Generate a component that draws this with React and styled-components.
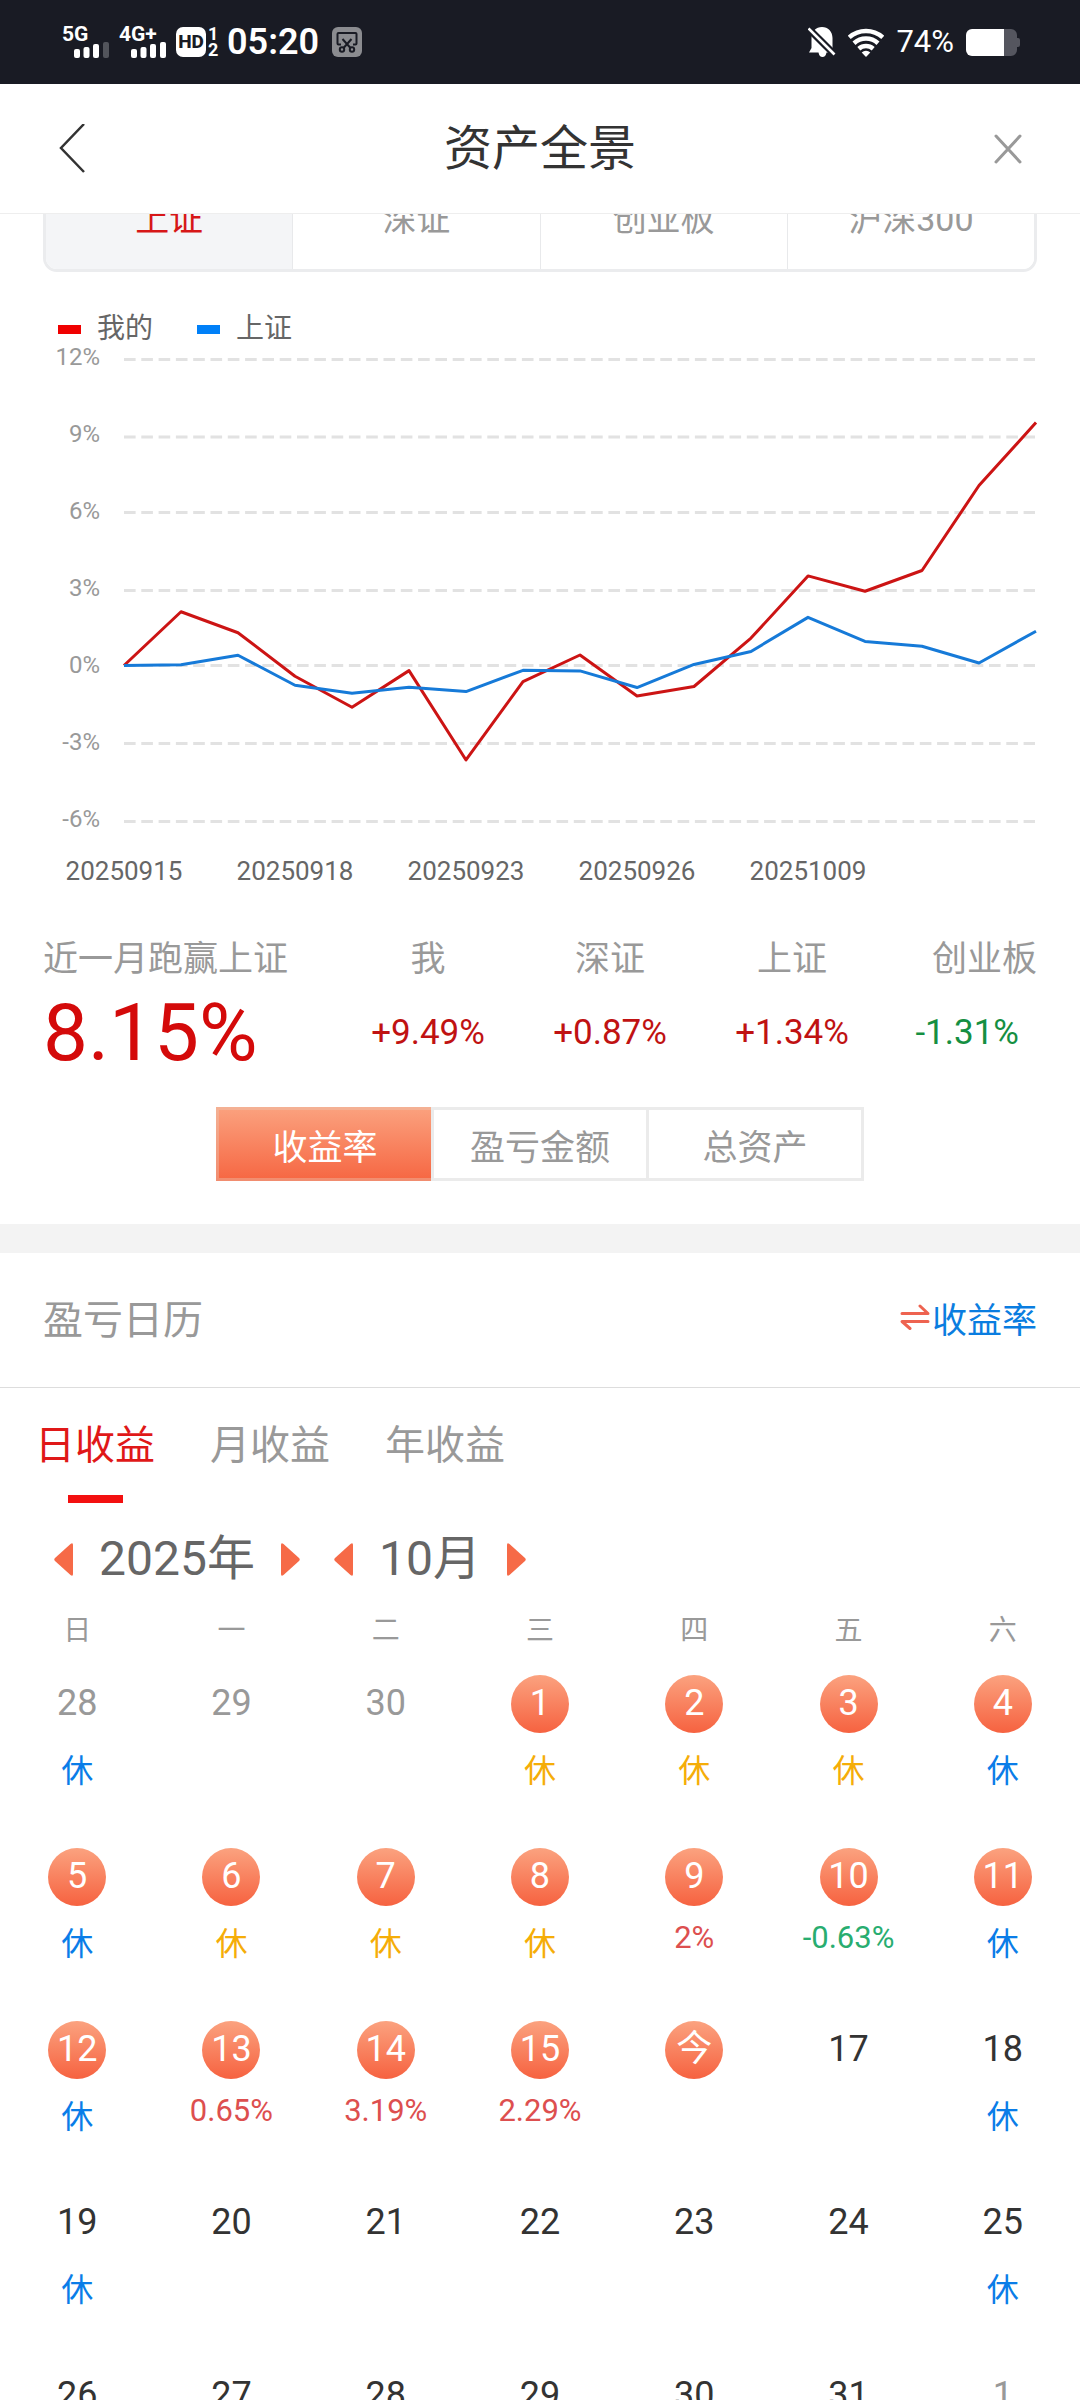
import React, {useState} from "react";
import styled, {createGlobalStyle} from "styled-components";

const GlobalStyle = createGlobalStyle`
  * {
    box-sizing: border-box;
  }

  body {
    margin: 0;
    background: #fff;
    color: #333;
    font-family: Roboto, "Noto Sans CJK SC", sans-serif;
  }

  button {
    padding: 0;
    border: 0;
    background: none;
    color: inherit;
    font: inherit;
    cursor: pointer;
  }

  svg {
    display: block;
  }
`;

const Page = styled.div`
  display: flex;
  flex-direction: column;
  height: 100vh;
`;

const StatusBar = styled.div`
  display: flex;
  flex: none;
  justify-content: space-between;
  align-items: center;
  height: 84px;
  padding: 0 60px 0 62px;
  background: #191b24;
  color: #fff;
`;

const StatusGroup = styled.div`
  display: flex;
  align-items: center;
  gap: ${(props) => props.gap};
`;

const Signal = styled.div`
  display: flex;
  flex-direction: column;
  width: 48px;
  font-size: 21px;
  font-weight: 700;
  line-height: 16px;

  svg {
    align-self: flex-end;
  }
`;

const HdBadge = styled.span`
  width: 30px;
  border-radius: 7px;
  background: #fff;
  color: #191b24;
  font-size: 19px;
  font-weight: 800;
  line-height: 30px;
  text-align: center;
`;

const SimNumbers = styled.span`
  display: flex;
  flex-direction: column;
  width: 10px;
  font-size: 18px;
  font-weight: 700;
  line-height: 16px;
  text-align: center;
`;

const Clock = styled.span`
  padding-right: 4px;
  font-size: 36px;
  font-weight: 600;
  line-height: 40px;
`;

const Percent = styled.span`
  font-size: 31px;
  line-height: 40px;
`;

const Header = styled.header`
  display: flex;
  flex: none;
  justify-content: space-between;
  align-items: center;
  height: 130px;
  padding: 0 56px;
  border-bottom: 1px solid #eee;

  h1 {
    margin: 0;
    font-size: 48px;
    font-weight: 400;
    line-height: 64px;
  }
`;

const Content = styled.main`
  flex: 1;
  min-height: 0;
  overflow-y: auto;
  scrollbar-width: none;
`;

/* scrolled halfway under the header */
const IndexTabs = styled.div`
  display: flex;
  height: 109px;
  margin: -51px 43px 0;
  border: 3px solid #ebecee;
  border-radius: 14px;
  overflow: hidden;
`;

const IndexTab = styled.button`
  flex: 1;
  padding-bottom: 3px;
  background: ${(props) => (props.$active ? "#f4f5f7" : "#fff")};
  color: ${(props) => (props.$active ? "#d71718" : "#999")};
  font-size: 34px;

  & + & {
    border-left: 1px solid #e8e9eb;
  }
`;

const Legend = styled.div`
  display: flex;
  gap: 44px;
  margin-top: 44px;
  padding-left: 58px;
  color: #666;
  font-size: 28px;
  line-height: 26px;

  span {
    display: flex;
    align-items: center;
    gap: 16px;
  }

  span::before {
    content: "";
    width: 23px;
    height: 9px;
    background: #f00000;
  }

  span + span::before {
    background: #0080f8;
  }
`;

const Chart = styled.svg`
  width: 100%;
  height: auto;

  text {
    fill: #999;
    font-size: 24px;
    text-anchor: end;
  }

  .date {
    fill: #666;
    font-size: 26px;
    text-anchor: middle;
  }

  polyline {
    fill: none;
    stroke-width: 3;
    stroke-linejoin: round;
  }
`;

const Stats = styled.div`
  display: grid;
  grid-template-columns: 294fr 182fr 182fr 182fr 154fr;
  margin: 48px 43px 0;
`;

const Stat = styled.div`
  display: flex;
  flex-direction: column;
  align-items: center;
  gap: 6px;
  color: #999;
  font-size: 35px;
  line-height: 40px;
  white-space: nowrap;

  strong {
    color: ${(props) => (props.$down ? "#158f42" : "#c01212")};
    font-weight: 400;
    line-height: 94px;
  }

  &:first-child {
    align-items: flex-start;
  }

  &:first-child strong {
    color: #d40a0a;
    font-size: 80px;
  }

  &:last-child {
    align-items: flex-end;
  }

  &:last-child strong {
    padding-right: 18px;
  }
`;

const Segments = styled.div`
  display: flex;
  width: 60%;
  height: 74px;
  margin: 27px auto 43px;
  border: 3px solid #ebebeb;
`;

const Segment = styled.button`
  flex: 1;
  color: #999;
  font-size: 35px;

  & + & {
    border-left: 3px solid #ebebeb;
  }

  ${(props) => props.$active && `
    margin: -3px 0 -3px -3px;
    border: 3px solid rgba(235, 200, 180, 0.4);
    border-right: 0;
    background: linear-gradient(#fba27f, #f66642) border-box;
    color: #fff;
  `}
`;

const Divider = styled.div`
  height: 29px;
  background: #f3f3f3;
`;

const SectionHead = styled.div`
  display: flex;
  justify-content: space-between;
  align-items: center;
  height: 135px;
  padding: 0 43px 6px;
  border-bottom: 1px solid #ddd;

  h2 {
    margin: 0;
    color: #999;
    font-size: 40px;
    font-weight: 400;
  }

  button {
    display: flex;
    align-items: center;
    gap: 2px;
    color: #0a7de0;
    font-size: 35px;
  }
`;

const PeriodTabs = styled.div`
  display: flex;
  gap: 55px;
  padding: 34px 35px 0;
`;

const PeriodTab = styled.button`
  display: flex;
  flex-direction: column;
  align-items: center;
  gap: 25px;
  color: ${(props) => (props.$active ? "#e01818" : "#999")};
  font-size: 40px;
  line-height: 48px;

  &::after {
    content: "";
    width: 55px;
    height: 8px;
    background: ${(props) => (props.$active ? "#f31010" : "transparent")};
  }
`;

const MonthNav = styled.div`
  display: flex;
  gap: 34px;
  margin-top: 28px;
  padding-left: 54px;
  color: #666;
  font-size: 48px;
  line-height: 56px;
`;

const Stepper = styled.div`
  display: flex;
  align-items: center;
  gap: 26px;
`;

const Calendar = styled.table`
  width: 100%;
  margin-top: 24px;
  border-collapse: collapse;
  table-layout: fixed;
  text-align: center;

  th {
    height: 64px;
    padding: 0;
    color: #999;
    font-size: 28px;
    font-weight: 400;
    line-height: 40px;
    vertical-align: top;
  }

  td {
    height: 173px;
    padding: 0;
    vertical-align: top;
  }
`;

const Day = styled.div`
  width: 58px;
  height: 58px;
  margin: 0 auto;
  border-radius: 50%;
  background: ${(props) => (props.$filled ? "linear-gradient(#fba27f, #f66240)" : "none")};
  color: ${(props) => (props.$filled ? "#fff" : props.$muted ? "#999" : "#333")};
  font-size: 36px;
  line-height: 56px;
`;

const Rest = styled.div`
  color: ${(props) => (props.$holiday ? "#f5ad08" : "#0a7de8")};
  font-size: 32px;
  line-height: 76px;
`;

const Gain = styled.div`
  color: ${(props) => (props.$down ? "#28ad70" : "#dd4f4f")};
  font-size: 31px;
  line-height: 64px;
`;

const mine = [0, 2.1, 1.28, -0.42, -1.63, -0.2, -3.69, -0.63, 0.41, -1.19, -0.82, 1.07, 3.5, 2.9, 3.71, 7.03, 9.49];
const shanghai = [0, 0.03, 0.4, -0.77, -1.08, -0.85, -1.02, -0.19, -0.21, -0.86, 0.04, 0.55, 1.88, 0.94, 0.75, 0.1, 1.34];
const levels = ["12%", "9%", "6%", "3%", "0%", "-3%", "-6%"];
const gridLines = [17.5, 95, 170.5, 248.5, 323.5, 401.5, 479.5];
const dates = ["20250915", "20250918", "20250923", "20250926", "20251009"];

const toPoints = (values) =>
  values.map((value, i) => `${124 + i * 57},${323.5 - value * 25.6}`).join(" ");

const stats = [
  ["近一月跑赢上证", "8.15%"],
  ["我", "+9.49%"],
  ["深证", "+0.87%"],
  ["上证", "+1.34%"],
  ["创业板", "-1.31%"],
];

// w = weekend, h = holiday, anything else is the day's return
const marks = {
  "28p": "w", 1: "h", 2: "h", 3: "h", 4: "w", 5: "w", 6: "h", 7: "h", 8: "h",
  9: "2%", 10: "-0.63%", 11: "w", 12: "w", 13: "0.65%", 14: "3.19%", 15: "2.29%",
  18: "w", 19: "w", 25: "w",
};

const weeks = [
  ["28p", "29p", "30p", 1, 2, 3, 4],
  [5, 6, 7, 8, 9, 10, 11],
  [12, 13, 14, 15, 16, 17, 18],
  [19, 20, 21, 22, 23, 24, 25],
  [26, 27, 28, 29, 30, 31, "1n"],
];

function SignalBars({weak}) {
  return (
    <svg width="36" height="16" fill="#fff">
      <rect x="0" y="7" width="6" height="9" rx="2" />
      <rect x="9.5" y="5" width="6" height="11" rx="2" />
      <rect x="19" y="2" width="6" height="14" rx="2" />
      <rect x="29" y="0" width="6" height="16" rx="2" opacity={weak ? 0.25 : 1} />
    </svg>
  );
}

function ScreenshotIcon() {
  return (
    <svg width="30" height="30" fill="none" stroke="#191b24" strokeWidth="2">
      <rect width="30" height="30" rx="6" fill="#8b8c90" stroke="none" />
      <path d="M9 17.5H6.5a1 1 0 0 1-1-1V7a1 1 0 0 1 1-1h17a1 1 0 0 1 1 1v9.500a1 1 0 0 1-1 1H21" />
      <path d="M10.500 12l8 9M19.500 12l-8 9" />
      <circle cx="10" cy="22.500" r="2.200" />
      <circle cx="20" cy="22.500" r="2.200" />
    </svg>
  );
}

function MutedIcon() {
  return (
    <svg width="28" height="30" viewBox="0 0 28 30">
      <path fill="#fff" d="M14 0C8 0 3.500 4.500 3.500 11v10L1 25.500h9.500C11 28.500 12.500 30 14.500 30s3.500-1.500 4-4.500H27L24.500 21V11C24.500 4.500 20 0 14 0z" />
      <path stroke="#191b24" strokeWidth="7" d="M-1 0L29 30" />
      <path stroke="#fff" strokeWidth="2.600" d="M0.500 1.500L26.500 27.500" />
    </svg>
  );
}

function WifiIcon() {
  return (
    <svg width="36" height="29" viewBox="0 0 36 29" fill="none" stroke="#fff" strokeWidth="4.500">
      <path d="M1.200 9.400a25 25 0 0 1 33.600 0" />
      <path d="M6 15.200a18 18 0 0 1 24 0" />
      <path d="M10.800 20.700a11 11 0 0 1 14.400 0" />
      <path d="M18 29l-4.300-4.500a6 6 0 0 1 8.600 0z" fill="#fff" stroke="none" />
    </svg>
  );
}

function BatteryIcon() {
  return (
    <svg width="54" height="27" viewBox="0 0 54 27">
      <path fill="#55565f" d="M38 0h7a6 6 0 0 1 6 6v3h1a2 2 0 0 1 2 2v5a2 2 0 0 1-2 2h-1v3a6 6 0 0 1-6 6h-7z" />
      <path fill="#fff" d="M6 0h32v27H6a6 6 0 0 1-6-6V6a6 6 0 0 1 6-6z" />
    </svg>
  );
}

function Arrow({right}) {
  return (
    <svg width="19" height="33" viewBox="0 0 19 33" fill="#f66a47">
      {right
        ? <path d="M0 2Q0-1 2.500 1L18 15Q19.500 16.500 18 18L2.500 32Q0 34 0 31z" />
        : <path d="M19 2Q19-1 16.500 1L1 15Q-.5 16.500 1 18L16.500 32Q19 34 19 31z" />}
    </svg>
  );
}

function Mark({mark}) {
  if (!mark) return null;
  if (mark === "w" || mark === "h") return <Rest $holiday={mark === "h"}>休</Rest>;
  return <Gain $down={mark.startsWith("-")}>{mark}</Gain>;
}

function App() {
  const [index, setIndex] = useState("上证");
  const [metric, setMetric] = useState("收益率");
  const [period, setPeriod] = useState("日收益");

  return (
    <Page>
      <GlobalStyle />
      <StatusBar>
        <StatusGroup gap="9px">
          <Signal>5G<SignalBars weak /></Signal>
          <Signal>4G+<SignalBars /></Signal>
          <StatusGroup gap="2px">
            <HdBadge>HD</HdBadge>
            <SimNumbers><span>1</span><span>2</span></SimNumbers>
          </StatusGroup>
          <Clock>05:20</Clock>
          <ScreenshotIcon />
        </StatusGroup>
        <StatusGroup gap="12px">
          <MutedIcon />
          <WifiIcon />
          <Percent>74%</Percent>
          <BatteryIcon />
        </StatusGroup>
      </StatusBar>
      <Header>
        <button aria-label="返回">
          <svg width="32" height="50" fill="none" stroke="#333" strokeWidth="2.500">
            <path d="M28 0L5 24L28 48" />
          </svg>
        </button>
        <h1>资产全景</h1>
        <button aria-label="关闭">
          <svg width="32" height="32" stroke="#999" strokeWidth="3" strokeLinecap="round">
            <path d="M4 3L28 29M28 3L4 29" />
          </svg>
        </button>
      </Header>
      <Content>
        <IndexTabs>
          {["上证", "深证", "创业板", "沪深300"].map((name) => (
            <IndexTab key={name} $active={name === index} onClick={() => setIndex(name)}>{name}</IndexTab>
          ))}
        </IndexTabs>
        <Legend>
          <span>我的</span>
          <span>上证</span>
        </Legend>
        <Chart viewBox="0 0 1080 550">
          {levels.map((level, i) => (
            <g key={level}>
              <text x="100" y={23 + i * 77}>{level}</text>
              <line x1="124" x2="1035" y1={gridLines[i]} y2={gridLines[i]} stroke="#e2e2e2" strokeWidth="3" strokeDasharray="11.600 5.700" />
            </g>
          ))}
          {dates.map((date, i) => (
            <text className="date" key={date} x={124 + i * 171} y="538">{date}</text>
          ))}
          <polyline points={toPoints(mine)} stroke="#cc1414" />
          <polyline points={toPoints(shanghai)} stroke="#167ad8" />
        </Chart>
        <Stats>
          {stats.map(([label, value]) => (
            <Stat key={label} $down={value.startsWith("-")}>
              <span>{label}</span>
              <strong>{value}</strong>
            </Stat>
          ))}
        </Stats>
        <Segments>
          {["收益率", "盈亏金额", "总资产"].map((name) => (
            <Segment key={name} $active={name === metric} onClick={() => setMetric(name)}>{name}</Segment>
          ))}
        </Segments>
        <Divider />
        <SectionHead>
          <h2>盈亏日历</h2>
          <button>
            <svg width="30" height="26" fill="none" stroke="#ee6350" strokeWidth="3" strokeLinecap="round" strokeLinejoin="round">
              <path d="M2 9.500H28L20 2M28 17.500H2L10 24.500" />
            </svg>
            收益率
          </button>
        </SectionHead>
        <PeriodTabs>
          {["日收益", "月收益", "年收益"].map((name) => (
            <PeriodTab key={name} $active={name === period} onClick={() => setPeriod(name)}>{name}</PeriodTab>
          ))}
        </PeriodTabs>
        <MonthNav>
          <Stepper>
            <button aria-label="上一年"><Arrow /></button>
            2025年
            <button aria-label="下一年"><Arrow right /></button>
          </Stepper>
          <Stepper>
            <button aria-label="上个月"><Arrow /></button>
            10月
            <button aria-label="下个月"><Arrow right /></button>
          </Stepper>
        </MonthNav>
        <Calendar>
          <thead>
            <tr>
              {["日", "一", "二", "三", "四", "五", "六"].map((name) => <th key={name}>{name}</th>)}
            </tr>
          </thead>
          <tbody>
            {weeks.map((week) => (
              <tr key={week[0]}>
                {week.map((day) => (
                  <td key={day}>
                    <Day $filled={day <= 16} $muted={typeof day === "string"}>
                      {day === 16 ? "今" : parseInt(day, 10)}
                    </Day>
                    <Mark mark={marks[day]} />
                  </td>
                ))}
              </tr>
            ))}
          </tbody>
        </Calendar>
      </Content>
    </Page>
  );
}

export default App;
